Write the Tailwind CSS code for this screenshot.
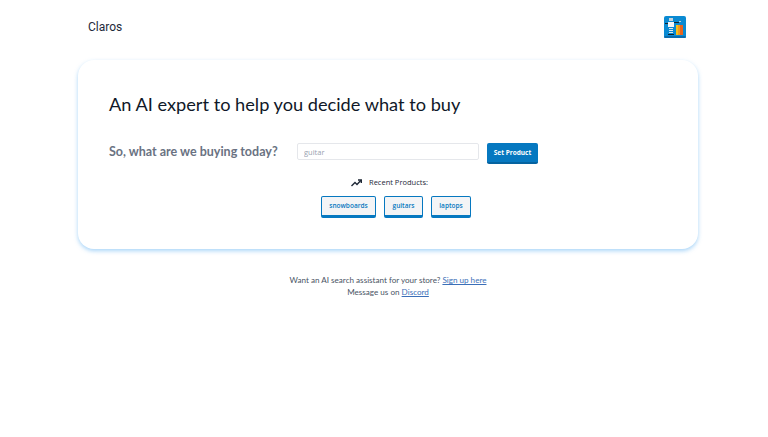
<!DOCTYPE html>
<html lang="en">
<head>
  <meta charset="UTF-8" />
  <title>Claros</title>
  <script src="https://cdn.jsdelivr.net/npm/@tailwindcss/browser@4"></script>
</head>
<body class="bg-white min-h-screen font-['Lato',sans-serif]">
  <!-- Navbar -->
  <nav class="h-[54px] pl-[88px] pr-[82px] flex justify-between items-center">
    <span class="text-[12px] text-gray-800 font-['Roboto',sans-serif]">Claros</span>
    <svg width="22" height="22" viewBox="0 0 22 22">
      <rect width="22" height="22" rx="2" fill="#0a8ad2" />
      <rect y="20" width="22" height="2" rx="1" fill="#0a6cae" />
      <rect x="5" y="2" width="4" height="3" fill="#c9d3da" />
      <rect x="4" y="6" width="6" height="5" fill="#f4f6f8" />
      <rect x="1" y="7" width="3" height="1" fill="#10232f" />
      <rect x="10" y="6" width="5" height="1" fill="#10232f" />
      <rect x="15" y="5" width="2" height="1" fill="#c9d3da" />
      <rect x="5" y="12" width="4" height="1" fill="#dfe6ea" />
      <rect x="5" y="14" width="4" height="1" fill="#dfe6ea" />
      <rect x="5" y="16" width="4" height="1" fill="#dfe6ea" />
      <rect x="4" y="18" width="6" height="1" fill="#10232f" />
      <rect x="12" y="9" width="2" height="10" fill="#f5c01c" />
      <rect x="14" y="9" width="2" height="10" fill="#f29a1e" />
      <rect x="16" y="9" width="3" height="10" fill="#e8651f" />
    </svg>
  </nav>

  <!-- Main card -->
  <main class="ml-[78px] mr-[70px] mt-[6px] h-[189px] rounded-2xl bg-white shadow-[0_2px_4px_rgba(125,190,245,0.65)] pl-[31px] pt-[30px]">
    <h1 class="text-[18.2px] leading-7 text-gray-900">An AI expert to help you decide what to buy</h1>

    <div class="mt-[25px] flex items-start">
      <h2 class="w-[188px] mt-[-1px] text-[12.5px] leading-5 font-bold text-gray-500">So, what are we buying today?</h2>
      <input type="text" placeholder="guitar" class="w-[182px] h-[17px] px-[6px] border border-gray-200 rounded-[2px] text-[7.5px] placeholder:text-gray-400 font-['Open_Sans',sans-serif]" />
      <button class="ml-[8px] w-[51px] h-[21px] rounded-[2px] bg-[#0678c0] border-b-2 border-[#0563a0] text-white text-[6.5px] font-bold font-['Open_Sans',sans-serif]">Set Product</button>
    </div>

    <div class="ml-[242px] w-[200px] mt-[13px] flex items-center gap-[7px] text-[7.5px] text-gray-800 font-['Open_Sans',sans-serif]">
      <svg width="11" height="8" viewBox="0 0 11 8" fill="none" stroke="#1f2937" stroke-width="1.4">
        <path d="M0.5 7 L4 3.5 L6 5.5 L10 1.2" />
        <path d="M7 1 H10.3 V4" />
      </svg>
      <span>Recent Products:</span>
    </div>

    <div class="ml-[212px] mt-[8px] flex gap-[8px] font-['Open_Sans',sans-serif]">
      <button class="w-[55px] h-[22px] rounded-[2px] bg-gray-100 border border-[#0678c0] border-b-[3px] text-[6.5px] font-semibold text-[#0678c0]">snowboards</button>
      <button class="w-[39px] h-[22px] rounded-[2px] bg-gray-100 border border-[#0678c0] border-b-[3px] text-[6.5px] font-semibold text-[#0678c0]">guitars</button>
      <button class="w-[40px] h-[22px] rounded-[2px] bg-gray-100 border border-[#0678c0] border-b-[3px] text-[6.5px] font-semibold text-[#0678c0]">laptops</button>
    </div>
  </main>

  <!-- Footer text -->
  <footer class="mt-[25px] pl-[8px] text-center text-[8.1px] leading-3 text-gray-600">
    <p>Want an AI search assistant for your store? <a href="#" class="text-[#3b6fb8] underline">Sign up here</a></p>
    <p>Message us on <a href="#" class="text-[#3b6fb8] underline">Discord</a></p>
  </footer>
</body>
</html>
